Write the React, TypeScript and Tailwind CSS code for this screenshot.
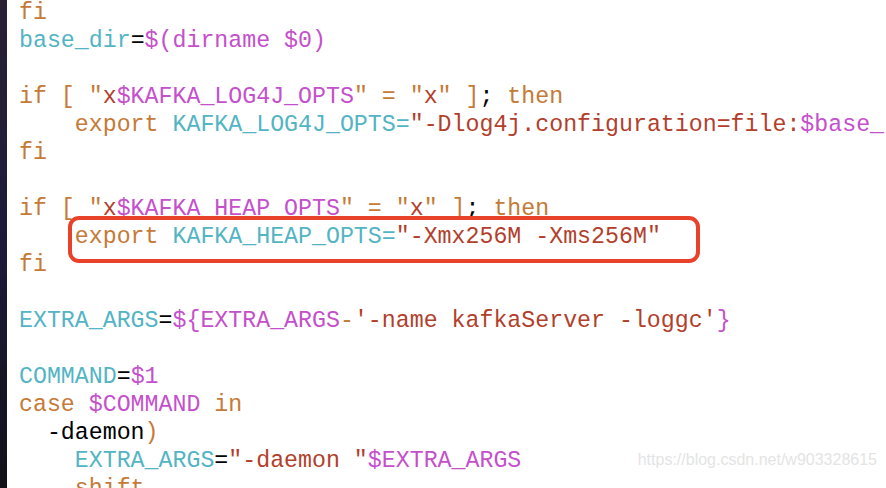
type Seg = [string, string];

const K = "text-[#c57a38]"; // keyword
const V = "text-[#52b4c4]"; // variable name
const M = "text-[#c550cc]"; // expansion
const S = "text-[#b23f2c]"; // string
const P = "text-black";

const lines: Seg[][] = [
  [["fi", K]],
  [["base_dir", V], ["=", P], ["$(dirname $0)", M]],
  [],
  [["if [ \"", K], ["x", S], ["$KAFKA_LOG4J_OPTS", M], ["\" = \"", K], ["x", S], ["\" ]", K], [";", P], [" then", K]],
  [["    export", K], [" KAFKA_LOG4J_OPTS=", V], ["\"-Dlog4j.configuration=file:", S], ["$base_", M]],
  [["fi", K]],
  [],
  [["if [ \"", K], ["x", S], ["$KAFKA_HEAP_OPTS", M], ["\" = \"", K], ["x", S], ["\" ]", K], [";", P], [" then", K]],
  [["    export", K], [" KAFKA_HEAP_OPTS=", V], ["\"-Xmx256M -Xms256M\"", S]],
  [["fi", K]],
  [],
  [["EXTRA_ARGS", V], ["=", P], ["${EXTRA_ARGS", M], ["-", K], ["'-name kafkaServer -loggc'", S], ["}", M]],
  [],
  [["COMMAND", V], ["=", P], ["$1", M]],
  [["case ", K], ["$COMMAND", M], [" in", K]],
  [["  -daemon", P], [")", K]],
  [["    EXTRA_ARGS", V], ["=", P], ["\"-daemon \"", S], ["$EXTRA_ARGS", M]],
  [["    shift", K]],
];

export default function App() {
  return (
    <div className="relative w-[886px] h-[488px] overflow-hidden bg-white flex">
      {/* desktop wallpaper peeking at the left edge */}
      <div className="w-[7px] h-full shrink-0 bg-gradient-to-b from-[#2a1f35] via-[#1b1a3a] to-[#121018]" />

      <div
        className="flex-1 pl-[12px] -mt-[1px] text-[23.25px] whitespace-pre"
        style={{ fontFamily: '"Liberation Mono", "DejaVu Sans Mono", monospace' }}
      >
        {lines.map((line, i) => (
          <div key={i} className="relative h-[28px] leading-[28px]">
            {line.map(([t, c], j) => (
              <span key={j} className={c}>
                {t}
              </span>
            ))}
            {i === 8 && (
              <div className="absolute left-[49px] top-[-7px] w-[632px] h-[47px] border-[4px] border-[#e8432a] rounded-[11px]" />
            )}
          </div>
        ))}
      </div>

      <div
        className="absolute right-[9px] bottom-[16px] text-[16px] text-[#e4e4e4]"
        style={{ fontFamily: '"Liberation Sans", Arial, sans-serif' }}
      >
        https://blog.csdn.net/w903328615
      </div>
    </div>
  );
}
